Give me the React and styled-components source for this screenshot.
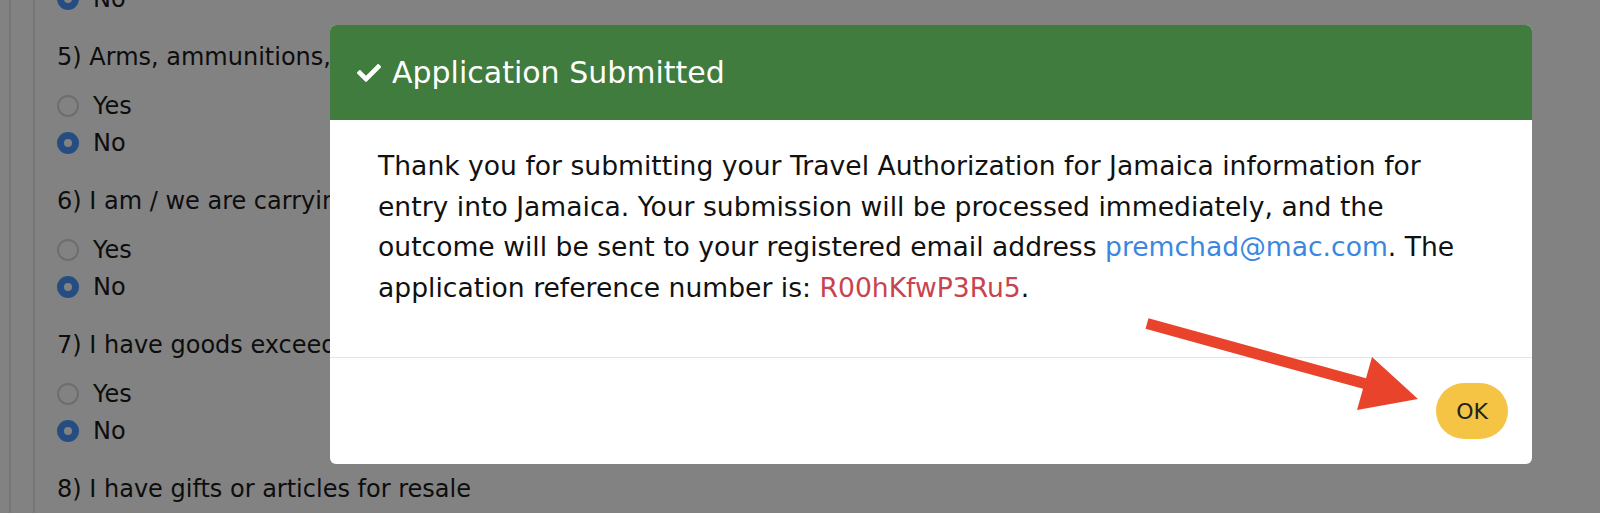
import React from "react";
import styled, { createGlobalStyle } from "styled-components";
import { FaCheck } from "react-icons/fa";

const GlobalStyle = createGlobalStyle`
    html, body {
        margin: 0;
        padding: 0;
    }
    body {
        font-family: "DejaVu Sans", "Liberation Sans", sans-serif;
        background: #fff;
        overflow: hidden;
    }
`;

const questions = [
    { id: 5, text: "5) Arms, ammunitions, or explosives", answer: "No" },
    { id: 6, text: "6) I am / we are carrying", answer: "No" },
    { id: 7, text: "7) I have goods exceeding", answer: "No" },
    { id: 8, text: "8) I have gifts or articles for resale", answer: null },
];

class App extends React.Component {
    render() {
        return (
            <>
                <GlobalStyle />
                <Page>
                    <OuterFrame>
                        <InnerFrame>
                            <Form>
                                <QuestionGroup>
                                    <Option>
                                        <Radio checked />
                                        No
                                    </Option>
                                </QuestionGroup>
                                {questions.map((q) => (
                                    <QuestionGroup key={q.id}>
                                        <Question>{q.text}</Question>
                                        <Option>
                                            <Radio checked={q.answer === "Yes"} />
                                            Yes
                                        </Option>
                                        <Option>
                                            <Radio checked={q.answer === "No"} />
                                            No
                                        </Option>
                                    </QuestionGroup>
                                ))}
                            </Form>
                        </InnerFrame>
                    </OuterFrame>
                </Page>

                <Backdrop />

                <Modal>
                    <ModalHeader>
                        <FaCheck size={24} />
                        <ModalTitle>Application Submitted</ModalTitle>
                    </ModalHeader>
                    <ModalBody>
                        Thank you for submitting your Travel Authorization for Jamaica information for
                        <br />
                        entry into Jamaica. Your submission will be processed immediately, and the
                        <br />
                        outcome will be sent to your registered email address{" "}
                        <Email>premchad@mac.com</Email>. The
                        <br />
                        application reference number is: <RefNumber>R00hKfwP3Ru5</RefNumber>.
                    </ModalBody>
                    <ModalFooter>
                        <OkButton>OK</OkButton>
                    </ModalFooter>
                </Modal>

                <Arrow viewBox="0 0 290 110">
                    <polygon points="8.5,8.2 226,68.2 232,47 278,89 217,100 223,78.8 5.5,18.8" />
                </Arrow>
            </>
        );
    }
}

const Page = styled.div`
    height: 513px;
    overflow: hidden;
    padding-left: 9px;
    background: #fff;
`;

const OuterFrame = styled.div`
    height: 100%;
    border-left: 2px solid #e7e7e7;
    padding-left: 22px;
`;

const InnerFrame = styled.div`
    display: flow-root;
    height: 100%;
    border-left: 2px solid #e7e7e7;
    padding-left: 22px;
`;

const Form = styled.div`
    display: flex;
    flex-direction: column;
    gap: 23px;
    margin-top: -20px;
    color: #1a1a1a;
`;

const QuestionGroup = styled.div`
    display: flex;
    flex-direction: column;
`;

const Question = styled.div`
    font-size: 24px;
    line-height: 34px;
    white-space: nowrap;
    margin-bottom: 13px;
`;

const Option = styled.label`
    display: flex;
    align-items: center;
    gap: 14px;
    height: 37px;
    font-size: 24px;
`;

const Radio = styled.span`
    width: 22px;
    height: 22px;
    box-sizing: border-box;
    border-radius: 50%;
    background: #fff;
    border: ${(p) => (p.checked ? "7px solid #4a98ff" : "2px solid #d6d6d6")};
`;

const Backdrop = styled.div`
    position: fixed;
    inset: 0;
    background: rgba(0, 0, 0, 0.49);
`;

const Modal = styled.div`
    position: fixed;
    top: 25px;
    left: 330px;
    width: 1202px;
    background: #fff;
    border-radius: 6px;
    overflow: hidden;
`;

const ModalHeader = styled.div`
    display: flex;
    align-items: center;
    gap: 11px;
    height: 95px;
    padding: 0 27px;
    background: #407c3e;
    color: #fff;
`;

const ModalTitle = styled.h2`
    margin: 0;
    font-size: 30px;
    font-weight: 400;
`;

const ModalBody = styled.div`
    padding: 26px 48px 49px;
    font-size: 26.6px;
    line-height: 40.5px;
    color: #111;
    white-space: nowrap;
`;

const Email = styled.span`
    color: #3b87df;
`;

const RefNumber = styled.span`
    color: #c8434e;
`;

const ModalFooter = styled.div`
    display: flex;
    justify-content: flex-end;
    padding: 25px 24px;
    border-top: 1px solid #e4e4e4;
`;

const OkButton = styled.button`
    width: 72px;
    height: 56px;
    border: none;
    border-radius: 28px;
    background: #f6c445;
    color: #222;
    font-family: "DejaVu Sans", sans-serif;
    font-size: 22px;
`;

const Arrow = styled.svg`
    position: fixed;
    left: 1140px;
    top: 310px;
    width: 290px;
    height: 110px;
    fill: #e9432b;
`;

export default App;
